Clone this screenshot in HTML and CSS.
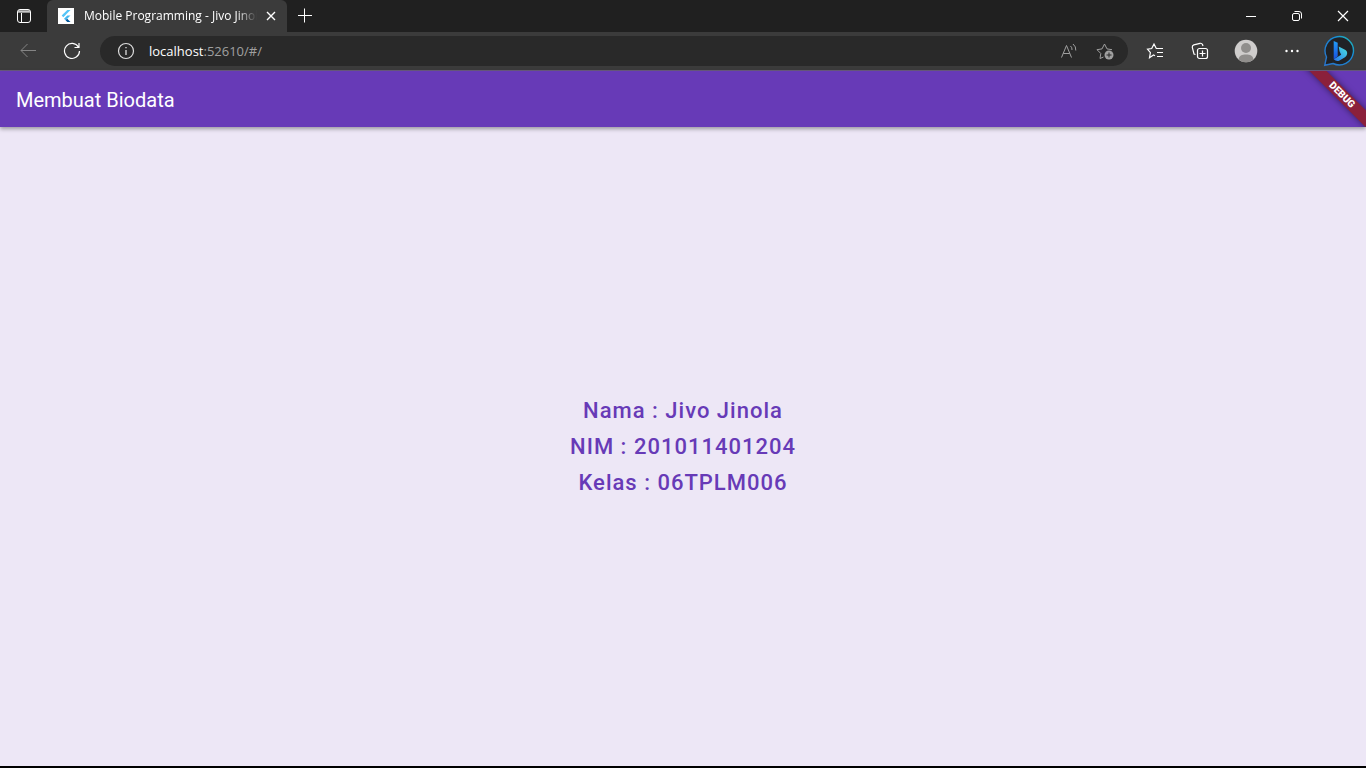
FILE: index.html
```html
<!DOCTYPE html>
<html lang="id">
<head>
<meta charset="utf-8">
<title>Mobile Programming - Jivo Jinola</title>
<link rel="stylesheet" href="styles.css">
</head>
<body>
<div class="browser">
  <header class="tabbar">
    <button class="icon-btn tab-actions" aria-label="Tab actions">
      <svg width="16" height="16" viewBox="0 0 16 16"><rect x="1.500" y="1.500" width="13" height="13" rx="2.500"/><path d="M2.500 3h11M2 4h12M5.500 5v9"/></svg>
    </button>
    <div class="tab">
      <svg class="solid" width="16" height="16" viewBox="0 0 16 16"><rect width="16" height="16" fill="#fff"/><path d="M9.300 2h3.200L5.300 9.200 3.700 7.600z" fill="#54c5f8"/><path d="M9.300 7.400h3.200L9.200 10.700l-1.600 1.600L6 10.700z" fill="#45b8f0"/><path d="M7.600 12.300l1.600-1.600 3.300 3.300H9.300z" fill="#01579b"/></svg>
      <span class="tab-title">Mobile Programming - Jivo Jinola</span>
      <button class="icon-btn tab-close" aria-label="Close tab"><svg width="10" height="10" viewBox="0 0 10 10"><path d="M1 1l8 8M9 1L1 9" stroke-width="1.400"/></svg></button>
    </div>
    <button class="icon-btn new-tab" aria-label="New tab"><svg width="16" height="16" viewBox="0 0 16 16"><path d="M1 7.500h14M7.500.5v14"/></svg></button>
    <div class="window-controls">
      <button class="icon-btn window-btn" aria-label="Minimize"><svg width="12" height="12" viewBox="0 0 12 12"><path d="M1 6.500h10"/></svg></button>
      <button class="icon-btn window-btn" aria-label="Restore"><svg width="12" height="12" viewBox="0 0 12 12"><rect x="1.500" y="3.500" width="7" height="7" rx="1.500"/><path d="M3.500 1.500h4.500a2.500 2.500 0 0 1 2.500 2.500v4.500"/></svg></button>
      <button class="icon-btn window-btn" aria-label="Close"><svg width="12" height="12" viewBox="0 0 12 12"><path d="M1 1l10 10M11 1L1 11" stroke-width="1.200"/></svg></button>
    </div>
  </header>

  <nav class="toolbar" aria-label="Browser">
    <button class="icon-btn tool back" aria-label="Back"><svg width="18" height="16" viewBox="0 0 18 16"><path d="M17 7.500H2M8.500 1L2 7.500 8.500 14"/></svg></button>
    <button class="icon-btn tool" aria-label="Refresh"><svg width="18" height="18" viewBox="0 0 18 18"><path d="M15.500 5.200A7.500 7.500 0 1 0 16.500 9M16 1v4.500h-4.500" stroke-width="1.200"/></svg></button>
    <div class="address">
      <button class="icon-btn info" aria-label="Site information"><svg width="18" height="18" viewBox="0 0 18 18"><circle cx="9" cy="9" r="7.500" stroke-width="1.200"/><path d="M9 8v5M9 5v1.300" stroke-width="1.300"/></svg></button>
      <a class="url" href="#/"><span class="host">localhost</span>:52610/#/</a>
      <button class="icon-btn tool dim" aria-label="Read aloud"><svg width="18" height="16" viewBox="0 0 18 16"><path d="M1.500 14.500L6.500 2.500l5 12M3.300 10.500h6.400M10.500 3q1.800 1.500 1.500 4M13 1q3.200 2.500 2.800 6.500"/></svg></button>
      <button class="icon-btn tool dim" aria-label="Add to favorites"><svg width="18" height="18" viewBox="0 0 18 18"><path d="M7.500 15L4 16.500l.8-5L1 7.700l5-.8L8.500 2 11 6.900l5 .8"/><circle cx="13" cy="13" r="4.500" fill="#a0a0a0" stroke="none"/><path d="M13 10.500v5M10.500 13h5" stroke="#292929"/></svg></button>
    </div>
    <button class="icon-btn tool" aria-label="Favorites"><svg width="18" height="18" viewBox="0 0 18 18"><path d="M9 13.800l-1.500-.8-4 2.700.9-5L1.500 7.200l4.200-.7L8 2l2.300 4.500H17M11 10.500h6M11 14.500h6" stroke-width="1.200"/></svg></button>
    <button class="icon-btn tool wide" aria-label="Collections"><svg width="18" height="18" viewBox="0 0 18 18"><rect x="6.500" y="6.500" width="10" height="10" rx="2" stroke-width="1.200"/><path d="M11.500 8.500v6M8.500 11.500h6M4.500 12.500L3 12 1.300 5.500q-.3-2 1.500-2.600L9 1.300q1.800-.3 2.500 1.200L12 4" stroke-width="1.200"/></svg></button>
    <button class="icon-btn tool wide" aria-label="Profile"><svg class="solid" width="24" height="24" viewBox="0 0 24 24"><circle cx="12" cy="12" r="11.300" fill="#cfcdcc"/><circle cx="12" cy="9" r="5" fill="#908e8c"/><path d="M4.500 20.500C5 16.500 8 15.500 12 15.500s7 1 7.500 5A11.300 11.300 0 0 1 4.500 20.500z" fill="#908e8c"/></svg></button>
    <button class="icon-btn tool wide" aria-label="Settings and more"><svg class="solid" width="16" height="4" viewBox="0 0 16 4"><g fill="#fff"><circle cx="2.500" cy="2" r="1.200"/><circle cx="8" cy="2" r="1.200"/><circle cx="13.500" cy="2" r="1.200"/></g></svg></button>
    <button class="icon-btn tool bing" aria-label="Bing chat">
      <svg class="solid" width="32" height="32" viewBox="0 0 32 32">
        <defs><linearGradient id="ring" x1="0" y1="1" x2="1" y2="0"><stop stop-color="#2a73c8"/><stop offset=".65" stop-color="#1689d8"/><stop offset="1" stop-color="#24bfae"/></linearGradient><linearGradient id="bing" x1="0" y1="0" x2="0" y2="1"><stop stop-color="#239df5"/><stop offset="1" stop-color="#174fe2"/></linearGradient><linearGradient id="wing" x1="0" y1="1" x2="1" y2="0"><stop stop-color="#2774f0"/><stop offset="1" stop-color="#4be4de"/></linearGradient></defs>
        <path d="M1.700 30.300L3.500 22A14.200 14.200 0 1 1 10 28.500z" fill="#202226" stroke="url(#ring)" stroke-width="1.400"/>
        <path d="M10.700 6l4 1.700v13.600l-4 3z" fill="url(#bing)"/><path d="M15.700 11.500l6.300 3.300q2.600 1.300 2.100 4.300-.3 2-2.100 3.200l-5.500 3.200q-3 1.600-5.800-1.200l7.500-4.600-1.700-3.500z" fill="url(#wing)"/>
      </svg>
    </button>
  </nav>

  <div class="app">
    <header class="appbar"><h1 class="appbar-title">Membuat Biodata</h1></header>
    <main class="content">
      <p class="line">Nama : Jivo Jinola</p>
      <p class="line">NIM : 201011401204</p>
      <p class="line">Kelas : 06TPLM006</p>
    </main>
    <div class="banner-area"><span class="banner">DEBUG</span></div>
  </div>
</div>
</body>
</html>
```

FILE: styles.css
```css
* { box-sizing: border-box; }
body { margin: 0; background: #000; font-family: "Open Sans", sans-serif; }
svg { display: block; flex: none; fill: none; stroke: currentColor; }
.solid { stroke: none; }

.browser { display: flex; flex-direction: column; min-height: 100vh; padding-bottom: 2px; }
.icon-btn { display: flex; align-items: center; justify-content: center; flex: none; margin: 0; padding: 0; border: 0; background: none; color: #fff; }

.tabbar { display: flex; height: 32px; background: #202020; }
.tab-actions { width: 47px; }
.tab { display: flex; align-items: center; width: 240px; padding: 0 6px 0 11px; background: #3b3b3b; border-radius: 6px 6px 0 0; }
.tab-title { flex: 1; min-width: 0; margin: 0 4px 0 10px; overflow: hidden; white-space: nowrap; color: #fff; font-size: 12px; line-height: 16px; -webkit-mask-image: linear-gradient(to right, #000 88%, transparent); mask-image: linear-gradient(to right, #000 88%, transparent); }
.tab-close { width: 20px; height: 20px; }
.new-tab { width: 36px; }
.window-controls { display: flex; margin-left: auto; }
.window-btn { width: 46px; }

.toolbar { display: flex; align-items: center; height: 39px; padding: 0 11px 0 6px; background: #3b3b3b; border-bottom: 1px solid #695a7d; }
.tool { width: 44px; height: 32px; }
.back { color: #858585; }
.address { display: flex; flex: 1; align-items: center; min-width: 0; height: 30px; margin: 0 5px 0 6px; padding-right: 5px; background: #292929; border-radius: 15px; }
.info { width: 32px; margin: 0 7px 0 10px; color: #ddd; }
.url { flex: 1; min-width: 0; color: #a0a0a0; font-size: 13px; line-height: 20px; text-decoration: none; }
.host { color: #fff; }
.dim { width: 36px; color: #a0a0a0; }
.wide { width: 46px; }
.bing { width: 32px; margin-left: 8px; }

.app { position: relative; display: flex; flex: 1; flex-direction: column; background: #ede7f6; font-family: Roboto, sans-serif; }
.appbar { display: flex; z-index: 1; align-items: center; height: 56px; padding: 2px 16px 0; background: #673ab7; box-shadow: 0 2px 4px rgba(0, 0, 0, .35); }
.appbar-title { margin: 0; color: #fff; font-size: 20px; font-weight: 400; line-height: 24px; }
.content { display: flex; flex: 1; flex-direction: column; align-items: center; justify-content: center; gap: 10px; }
.line { margin: 0; color: #673ab7; font-size: 22px; font-weight: 500; line-height: 26px; letter-spacing: 1px; }

.banner-area { position: absolute; z-index: 2; top: 0; right: 0; width: 72px; height: 56px; overflow: hidden; }
.banner { position: absolute; top: 18px; right: -36px; width: 120px; background: #8b203b; box-shadow: 0 0 6px rgba(0, 0, 0, .5); color: #fff; font-size: 10px; font-weight: 900; line-height: 12px; text-align: center; transform: rotate(45deg); }
```
